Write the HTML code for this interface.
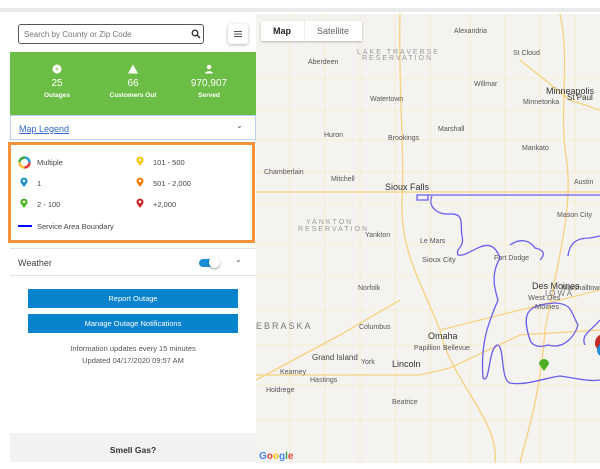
<!DOCTYPE html>
<html><head><meta charset="utf-8"><style>
*{box-sizing:border-box;margin:0;padding:0}
body{width:600px;height:469px;overflow:hidden;background:#fff;font-family:"Liberation Sans",sans-serif;position:relative}
.abs{position:absolute}
.line{left:0;top:8px;width:600px;height:4px;background:#ebebeb}
.panel{left:10px;top:14px;width:246px;height:455px;background:#fff}
.search{left:18px;top:24px;width:186px;height:20px;border:1px solid #555;border-radius:3px;font-size:8px;color:#777;padding:5px 0 0 5px}
.menu{left:228px;top:24px;width:20px;height:20px;background:#fff;border-radius:3px;box-shadow:0 1px 3px rgba(0,0,0,.3)}
.green{left:10px;top:52px;width:246px;height:63px;background:#6cbd45;color:#fff}
.st{position:absolute;top:0;width:82px;text-align:center}
.st .n{font-size:10px;margin-top:26px}
.st .l{font-size:6.5px;font-weight:bold;margin-top:3px}
.st .ic{position:absolute;left:36px;top:12px;width:10px;height:10px}
.legend{left:10px;top:115px;width:246px;height:25px;border:1px solid #b9d3ee;font-size:9px;color:#36c}
.orange{left:8px;top:142px;width:247px;height:101px;border:3px solid #f7913a;background:#fff;font-size:7.5px;color:#444}
.weather{left:10px;top:248px;width:246px;height:28px;border-top:1px solid #e3e3e3;border-bottom:1px solid #e3e3e3;font-size:9px;color:#444}
.btn{left:28px;width:210px;height:19px;background:#0a83cf;color:#fff;font-size:7.5px;text-align:center;line-height:19px}
.info{left:10px;width:246px;text-align:center;font-size:7.5px;color:#555}
.foot{left:10px;top:433px;width:246px;height:29px;background:#f2f2f2;text-align:center;font-size:8px;color:#333;overflow:hidden}
.map{left:256px;top:14px;width:344px;height:449px;background:#f4f3f0;overflow:hidden}
.mapctl{left:261px;top:21px;width:101px;height:20px;background:#fff;box-shadow:0 1px 2px rgba(0,0,0,.25);font-size:9px}
</style></head><body>
<div class="abs line"></div>
<div class="abs panel"></div>
<div class="abs search">Search by County or Zip Code
<svg class="abs" style="left:172px;top:4px" width="10" height="10" viewBox="0 0 10 10"><circle cx="4" cy="4" r="2.8" fill="none" stroke="#333" stroke-width="1.3"/><path d="M6 6l3 3" stroke="#333" stroke-width="1.5"/></svg></div>
<div class="abs menu"><svg class="abs" style="left:6px;top:7px" width="8" height="6"><path d="M0 .5h8M0 3h8M0 5.5h8" stroke="#555" stroke-width="1"/></svg></div>
<div class="abs green">
 <div class="st" style="left:6px"><svg class="ic" viewBox="0 0 10 10"><circle cx="5" cy="5" r="4.5" fill="#fff"/><path d="M5.5 2L3.5 5.5h2L4.5 8l2-3.5h-2z" fill="#6cbd45"/></svg><div class="n">25</div><div class="l">Outages</div></div>
 <div class="st" style="left:82px"><svg class="ic" viewBox="0 0 10 10"><path d="M5 .5L10 9.5H0z" fill="#fff"/></svg><div class="n">66</div><div class="l">Customers Out</div></div>
 <div class="st" style="left:158px"><svg class="ic" viewBox="0 0 10 10"><circle cx="5" cy="3" r="2.3" fill="#fff"/><path d="M1 9.5c0-3 8-3 8 0z" fill="#fff"/></svg><div class="n">970,907</div><div class="l">Served</div></div>
</div>
<div class="abs legend"><span class="abs" style="left:8px;top:8px;text-decoration:underline">Map Legend</span><span class="abs" style="left:225px;top:5px;color:#555;font-size:8px">&#8964;</span></div>
<div class="abs orange">
 <svg class="abs" style="left:7px;top:11px" width="13" height="13" viewBox="0 0 13 13"><circle cx="6.5" cy="6.5" r="5" fill="none" stroke="#e33" stroke-width="2.4" stroke-dasharray="8 24"/><circle cx="6.5" cy="6.5" r="5" fill="none" stroke="#fb3" stroke-width="2.4" stroke-dasharray="0 8 8 24"/><circle cx="6.5" cy="6.5" r="5" fill="none" stroke="#3a3" stroke-width="2.4" stroke-dasharray="0 16 8 24"/><circle cx="6.5" cy="6.5" r="5" fill="none" stroke="#29d" stroke-width="2.4" stroke-dasharray="0 24 8 24"/></svg>
 <span class="abs" style="left:26px;top:13px">Multiple</span>
 <span class="abs" style="left:26px;top:34px">1</span>
 <span class="abs" style="left:26px;top:55px">2 - 100</span>
 <span class="abs" style="left:26px;top:77px">Service Area Boundary</span>
 <span class="abs" style="left:142px;top:13px">101 - 500</span>
 <span class="abs" style="left:142px;top:34px">501 - 2,000</span>
 <span class="abs" style="left:142px;top:55px">+2,000</span>
 <div class="abs" style="left:7px;top:80px;width:14px;height:2px;background:#00f"></div>
 <svg class="abs" style="left:9px;top:32px" width="8" height="10"><path d="M4 10L.8 5.5A3.5 3.5 0 1 1 7.2 5.5z" fill="#1a8fd6"/><circle cx="4" cy="3.8" r="1.3" fill="#fff"/></svg>
 <svg class="abs" style="left:9px;top:53px" width="8" height="10"><path d="M4 10L.8 5.5A3.5 3.5 0 1 1 7.2 5.5z" fill="#4caf1d"/><circle cx="4" cy="3.8" r="1.3" fill="#fff"/></svg>
 <svg class="abs" style="left:125px;top:11px" width="8" height="10"><path d="M4 10L.8 5.5A3.5 3.5 0 1 1 7.2 5.5z" fill="#f9c800"/><circle cx="4" cy="3.8" r="1.3" fill="#fff"/></svg>
 <svg class="abs" style="left:125px;top:32px" width="8" height="10"><path d="M4 10L.8 5.5A3.5 3.5 0 1 1 7.2 5.5z" fill="#f57c00"/><circle cx="4" cy="3.8" r="1.3" fill="#fff"/></svg>
 <svg class="abs" style="left:125px;top:53px" width="8" height="10"><path d="M4 10L.8 5.5A3.5 3.5 0 1 1 7.2 5.5z" fill="#c62828"/><circle cx="4" cy="3.8" r="1.3" fill="#fff"/></svg>
</div>
<div class="abs weather"><span class="abs" style="left:8px;top:9px">Weather</span>
 <div class="abs" style="left:189px;top:10px;width:15px;height:8px;border-radius:4px;background:#1a8fd6"></div>
 <div class="abs" style="left:199px;top:8px;width:11px;height:11px;border-radius:6px;background:#fff;box-shadow:0 1px 2px rgba(0,0,0,.4)"></div>
 <span class="abs" style="left:225px;top:6px;color:#555;font-size:8px">&#8964;</span></div>
<div class="abs btn" style="top:289px">Report Outage</div>
<div class="abs btn" style="top:314px">Manage Outage Notifications</div>
<div class="abs info" style="top:344px">Information updates every 15 minutes</div>
<div class="abs info" style="top:356px">Updated 04/17/2020 09:57 AM</div>
<div class="abs foot"><div style="margin-top:12px;font-weight:bold;font-size:8.5px">Smell Gas?</div><div style="margin-top:6px;color:#555">To report a gas emergency call:</div></div>
<div class="abs map">
<svg width="344" height="449" viewBox="256 14 344 449" style="position:absolute;left:0;top:0">
 <g stroke="#f6e6b8" stroke-width="0.6" fill="none">
  <path d="M256 78H600M256 110H600M256 140H600M256 172H600M256 203H600M256 245H600M256 275H600M256 310H600M256 345H600M256 385H600M256 420H600"/>
  <path d="M290 14V463M325 14V463M360 14V463M395 14V463M430 14V463M470 14V463M505 14V463M540 14V463M575 14V463"/>
 </g>
 <g stroke="#f6d27e" stroke-width="1.3" fill="none">
  <path d="M256 192H600"/><path d="M400 14C398 80 405 160 402 200C400 250 420 280 440 330C450 380 500 420 495 463"/>
  <path d="M256 375H420L450 368L520 335L600 330"/><path d="M440 330L600 290"/>
  <path d="M560 14C570 60 560 100 565 150C575 200 560 250 545 330C540 400 525 440 520 463"/>
  <path d="M520 60L570 100L600 110"/><path d="M256 380L340 335L400 300"/>
 </g>
 <path d="M417 195H600M417 195H428V200H417Z" stroke="#6a5df0" stroke-width="1.3" fill="none"/>
 <path d="M432 196C428 205 435 215 450 214C465 213 460 225 462 236C465 248 455 248 458 255C470 258 490 230 500 258C490 275 495 290 498 300C490 320 480 340 483 378C490 385 488 350 497 345C505 345 500 380 510 383C525 386 545 378 560 376C575 378 590 382 600 380" stroke="#6a5df0" stroke-width="1.3" fill="none"/>
 <path d="M530 340C520 310 530 305 555 303C572 304 570 310 578 325C575 335 565 350 548 345C540 348 532 346 530 340Z" stroke="#6a5df0" stroke-width="1.3" fill="none"/>
 <path d="M510 245C520 238 530 240 535 248C545 250 545 255 540 260" stroke="#6a5df0" stroke-width="1.3" fill="none"/>
 <path d="M568 256C570 240 580 238 590 238L600 236M600 320C592 330 580 335 585 345" stroke="#6a5df0" stroke-width="1.3" fill="none"/>
 <path d="M544 371L539 364A5 5 0 1 1 549 364Z" fill="#4caf1d"/>
 <circle cx="604" cy="343" r="9" fill="#c62828"/><circle cx="604" cy="350" r="7" fill="#1a8fd6"/>
 <g font-family="Liberation Sans,sans-serif" font-size="7" fill="#555">
  <text x="308" y="64">Aberdeen</text><text x="454" y="33">Alexandria</text><text x="513" y="55">St Cloud</text><text x="474" y="86">Willmar</text>
  <text x="370" y="101">Watertown</text><text x="438" y="131">Marshall</text><text x="324" y="137">Huron</text><text x="388" y="140">Brookings</text>
  <text x="522" y="150">Mankato</text><text x="264" y="174">Chamberlain</text><text x="331" y="181">Mitchell</text><text x="574" y="184">Austin</text>
  <text x="557" y="217">Mason City</text><text x="494" y="260">Fort Dodge</text><text x="562" y="290">Marshalltown</text>
  <text x="358" y="290">Norfolk</text><text x="359" y="329">Columbus</text><text x="414" y="350">Papillion</text><text x="443" y="350">Bellevue</text>
  <text x="361" y="364">York</text><text x="280" y="374">Kearney</text><text x="310" y="382">Hastings</text><text x="266" y="392">Holdrege</text><text x="392" y="404">Beatrice</text>
  <text x="422" y="262" font-size="7.5">Sioux City</text><text x="420" y="243">Le Mars</text><text x="365" y="237">Yankton</text>
  <text x="312" y="360" font-size="8" fill="#444">Grand Island</text><text x="528" y="300" font-size="7.5">West Des</text><text x="535" y="309" font-size="7.5">Moines</text>
  <text x="523" y="104">Minnetonka</text><text x="567" y="100" font-size="8" fill="#333">St Paul</text>
 </g>
 <g font-family="Liberation Sans,sans-serif" font-size="9" fill="#333">
  <text x="546" y="94">Minneapolis</text><text x="385" y="190">Sioux Falls</text><text x="428" y="339">Omaha</text><text x="392" y="367">Lincoln</text><text x="532" y="289">Des Moines</text>
 </g>
 <g font-family="Liberation Sans,sans-serif" font-size="7" fill="#999" letter-spacing="2">
  <text x="357" y="54">LAKE TRAVERSE</text><text x="362" y="60">RESERVATION</text><text x="306" y="224">YANKTON</text><text x="298" y="231">RESERVATION</text>
  <text x="256" y="329" font-size="9" fill="#777">EBRASKA</text><text x="545" y="296" font-size="8" fill="#777">IOWA</text>
 </g>
 <text x="259" y="459" font-family="Liberation Sans,sans-serif" font-size="10" font-weight="bold" fill="#4285f4">G<tspan fill="#ea4335">o</tspan><tspan fill="#fbbc05">o</tspan>g<tspan fill="#34a853">l</tspan><tspan fill="#ea4335">e</tspan></text>
</svg>
</div>
<div class="abs mapctl"><span class="abs" style="left:12px;top:5px;font-weight:bold;color:#222">Map</span><div class="abs" style="left:43px;top:0;width:1px;height:20px;background:#eee"></div><span class="abs" style="left:56px;top:5px;color:#666">Satellite</span></div>
</body></html>
